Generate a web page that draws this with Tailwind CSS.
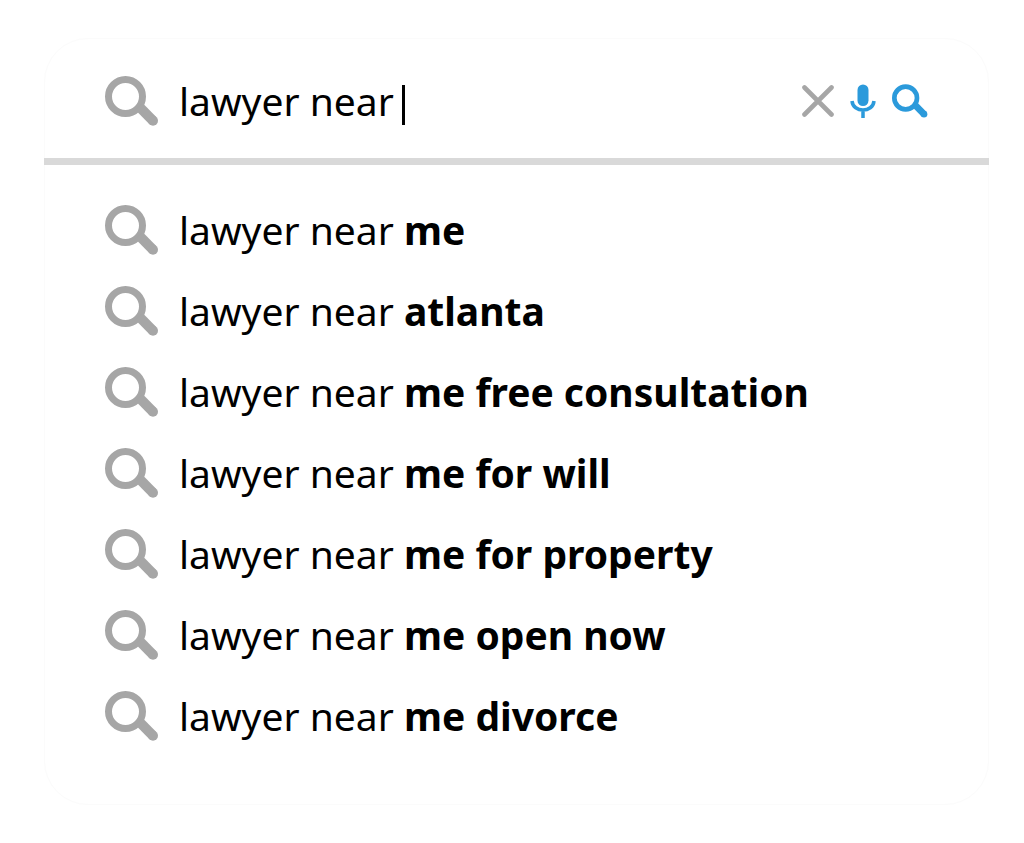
<!DOCTYPE html>
<html lang="en">
<head>
    <meta charset="UTF-8">
    <meta name="viewport" content="width=device-width, initial-scale=1.0">
    <title>lawyer near</title>
    <script src="https://cdn.jsdelivr.net/npm/@tailwindcss/browser@4"></script>
</head>
<body class="bg-white min-h-screen text-black text-[39px] leading-[56px] font-['Noto_Sans','Open_Sans',sans-serif]">
    <!-- shared magnifier shape -->
    <svg class="hidden">
        <symbol id="magnifier" viewBox="0 0 54 50">
            <circle cx="20.5" cy="20.5" r="17" fill="none" stroke="currentColor" stroke-width="7" />
            <path d="M34 30.5L48 44.7" fill="none" stroke="currentColor" stroke-width="10" />
            <circle cx="48" cy="44.7" r="5" fill="currentColor" />
        </symbol>
    </svg>

    <main class="mt-[38px] ml-11 mr-[35px] rounded-[44px] border border-[#fbfbfb]">
        <form class="flex items-center pt-1 h-[119px] pl-15 pr-15" role="search">
            <label for="query" aria-label="Search" class="shrink-0 mr-5 text-[#a6a6a6]">
                <svg class="w-[54px] h-[50px]"><use href="#magnifier" /></svg>
            </label>
            <input id="query" type="text" value="lawyer near" autocomplete="off" class="field-sizing-content h-14 p-0 outline-none">
            <span class="w-[3px] h-10 mt-2 ml-2 bg-black"></span>
            <div class="ml-auto flex items-center gap-4">
                <button type="reset" aria-label="Clear">
                    <svg class="block w-8 h-8" viewBox="0 0 32 32" fill="none" stroke="#a6a6a6" stroke-width="4.6" stroke-linecap="round">
                        <path d="M2.5 2.5L29.5 29.5M29.5 2.5L2.5 29.5" />
                    </svg>
                </button>
                <button type="button" aria-label="Search by voice">
                    <svg class="block w-[26px] h-[34px]" viewBox="0 0 26 34">
                        <rect x="7.5" y="0.5" width="11" height="21.5" rx="5.5" fill="#2b9adb" />
                        <path d="M2 17C3 29 23 29 24 17M13 26V34" fill="none" stroke="#2b9adb" stroke-width="3.5" />
                    </svg>
                </button>
                <button type="submit" aria-label="Search" class="text-[#2b9adb]">
                    <svg class="block w-9 h-[34px]"><use href="#magnifier" /></svg>
                </button>
            </div>
        </form>

        <hr class="border-0 -mx-px h-[7px] bg-[#d9d9d9]">

        <ul class="pt-6 pb-12 pl-15">
            <li class="flex items-center h-[81px] gap-5">
                <svg class="shrink-0 w-[54px] h-[50px] text-[#a6a6a6]"><use href="#magnifier" /></svg>
                <a href="#">lawyer near <b>me</b></a>
            </li>
            <li class="flex items-center h-[81px] gap-5">
                <svg class="shrink-0 w-[54px] h-[50px] text-[#a6a6a6]"><use href="#magnifier" /></svg>
                <a href="#">lawyer near <b>atlanta</b></a>
            </li>
            <li class="flex items-center h-[81px] gap-5">
                <svg class="shrink-0 w-[54px] h-[50px] text-[#a6a6a6]"><use href="#magnifier" /></svg>
                <a href="#">lawyer near <b>me free consultation</b></a>
            </li>
            <li class="flex items-center h-[81px] gap-5">
                <svg class="shrink-0 w-[54px] h-[50px] text-[#a6a6a6]"><use href="#magnifier" /></svg>
                <a href="#">lawyer near <b>me for will</b></a>
            </li>
            <li class="flex items-center h-[81px] gap-5">
                <svg class="shrink-0 w-[54px] h-[50px] text-[#a6a6a6]"><use href="#magnifier" /></svg>
                <a href="#">lawyer near <b>me for property</b></a>
            </li>
            <li class="flex items-center h-[81px] gap-5">
                <svg class="shrink-0 w-[54px] h-[50px] text-[#a6a6a6]"><use href="#magnifier" /></svg>
                <a href="#">lawyer near <b>me open now</b></a>
            </li>
            <li class="flex items-center h-[81px] gap-5">
                <svg class="shrink-0 w-[54px] h-[50px] text-[#a6a6a6]"><use href="#magnifier" /></svg>
                <a href="#">lawyer near <b>me divorce</b></a>
            </li>
        </ul>
    </main>
</body>
</html>
